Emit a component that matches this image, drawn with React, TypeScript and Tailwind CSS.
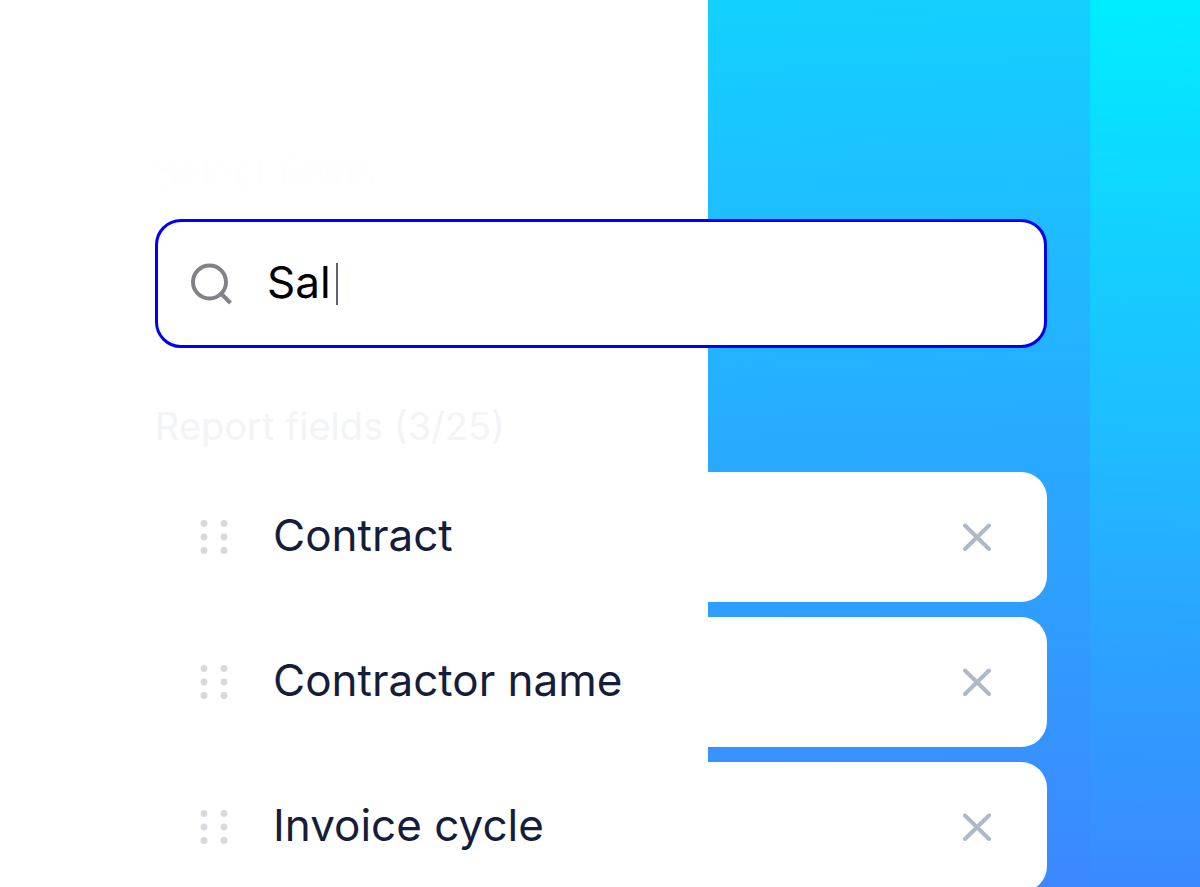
import React, { useState } from 'react';

const initialFields = ['Contract', 'Contractor name', 'Invoice cycle'];

const SearchIcon: React.FC = () => (
  <svg width="44" height="44" viewBox="0 0 44 44" fill="none" stroke="#808287" strokeWidth="4" className="shrink-0" aria-hidden="true">
    <circle cx="19.5" cy="20" r="16.5" />
    <path d="M31 31.5L40.5 41" />
  </svg>
);

const GripIcon: React.FC = () => (
  <svg width="28" height="36" viewBox="0 0 28 36" fill="#d7d9de" className="shrink-0" aria-hidden="true">
    <circle cx="4" cy="4.5" r="3.4" />
    <circle cx="24" cy="4.5" r="3.4" />
    <circle cx="4" cy="18" r="3.4" />
    <circle cx="24" cy="18" r="3.4" />
    <circle cx="4" cy="31.5" r="3.4" />
    <circle cx="24" cy="31.5" r="3.4" />
  </svg>
);

const CloseIcon: React.FC = () => (
  <svg width="28" height="28" viewBox="0 0 28 28" fill="none" stroke="#adb9c9" strokeWidth="4" strokeLinecap="round" aria-hidden="true">
    <path d="M2 2.5L26 26M26 2.5L2 26" />
  </svg>
);

const App: React.FC = () => {
  const [query, setQuery] = useState('Sal');
  const [fields, setFields] = useState(initialFields);

  return (
    <div className="flex h-screen overflow-hidden font-['Inter','Liberation_Sans',sans-serif]">
      {/* White sheet on the left, blue fade behind the cards */}
      <main className="h-full min-w-0 flex-1 bg-[linear-gradient(to_right,#fff_65%,transparent_65%),linear-gradient(178deg,#11d3ff_0%,#1ebeff_26%,#28aaff_52%,#309cff_72%,#3d87ff_100%)] pt-[148px] pr-[43px] pl-[155px]">
        <label htmlFor="field-search" className="block text-[38px] leading-[48px] text-[#fefefe]">
          Select fields
        </label>

        {/* Search */}
        <label
          htmlFor="field-search"
          className="mt-[23px] flex h-[129px] cursor-text items-center rounded-[26px] border-3 border-[#0000f5] bg-white pl-8"
        >
          <SearchIcon />
          <span className="ml-[33px] flex items-center gap-[5px]">
            <input
              id="field-search"
              type="text"
              value={query}
              onChange={(e) => setQuery(e.target.value)}
              className="field-sizing-content bg-transparent pb-1 text-[44px] leading-[52px] text-black caret-transparent outline-none"
            />
            <span className="h-[42px] w-[2px] bg-[#5f6275]" />
          </span>
        </label>

        {/* Selected fields */}
        <h2 className="mt-[54px] text-[38px] leading-[48px] text-[#f3f4f8]">
          Report fields ({fields.length}/25)
        </h2>
        <ul className="mt-[22px] flex flex-col gap-[15px]">
          {fields.map((field) => (
            <li key={field} className="flex h-[130px] shrink-0 items-center rounded-[26px] bg-white pr-[56px] pl-[45px]">
              <GripIcon />
              <span className="ml-[45px] flex-1 pb-1 text-[44px] leading-[52px] text-[#161d3c]">{field}</span>
              <button
                type="button"
                aria-label={`Remove ${field}`}
                onClick={() => setFields(fields.filter((f) => f !== field))}
                className="cursor-pointer"
              >
                <CloseIcon />
              </button>
            </li>
          ))}
        </ul>
      </main>
      <div className="w-[110px] shrink-0 bg-[linear-gradient(182deg,#00eeff_0%,#12d2ff_25%,#1fbcff_50%,#2ca2ff_73%,#3b89ff_100%)]" />
    </div>
  );
};

export default App;
